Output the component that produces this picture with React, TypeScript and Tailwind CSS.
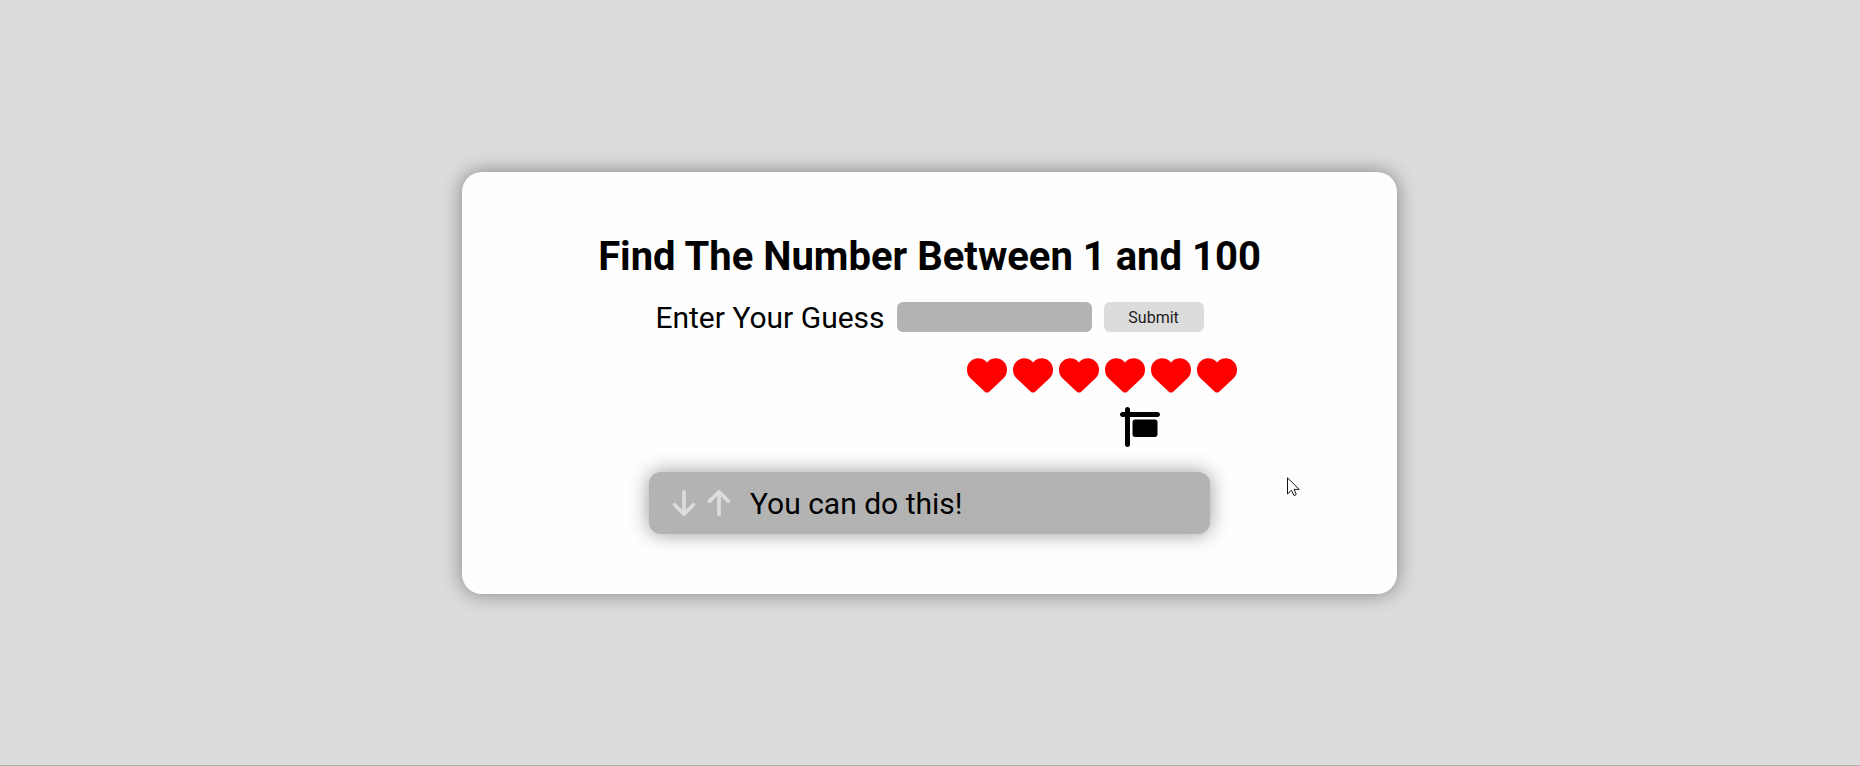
import { useState } from "react";
import type { FormEvent } from "react";
import { FaArrowDown, FaArrowUp, FaHeart, FaSignHanging } from "react-icons/fa6";

const LIVES = [1, 2, 3, 4, 5, 6];

function Pointer() {
  return (
    <svg
      className="absolute top-[305px] right-[97px] h-[20px] w-[13px]"
      viewBox="0 0 13 20"
      aria-hidden="true"
    >
      <path
        d="M0.5 0.8V17L4.4 13.4L6.9 18.3Q8.8 18.8 9.2 17L7 12.4H12.2Z"
        fill="#fff"
        stroke="#14141c"
        strokeWidth="1"
      />
    </svg>
  );
}

function GuessForm() {
  const [guess, setGuess] = useState("");
  const submit = (event: FormEvent) => {
    event.preventDefault();
    setGuess("");
  };
  return (
    <form onSubmit={submit} className="mt-5 flex h-[30px] items-center justify-center gap-3">
      <label htmlFor="guess" className="pt-[2px] text-[30px] leading-9">
        Enter Your Guess
      </label>
      <input
        id="guess"
        type="text"
        value={guess}
        onChange={(event) => setGuess(event.target.value)}
        className="h-[30px] w-[195px] rounded-md bg-[#b3b3b3] px-2 text-base outline-none"
      />
      <button
        type="submit"
        className="h-[30px] w-[100px] rounded-md bg-[#dcdcdc] pt-[2px] text-base text-[#1c1c1c]"
      >
        Submit
      </button>
    </form>
  );
}

export default function App() {
  return (
    <div className="flex min-h-screen flex-col items-center justify-center border-b border-[#acacac] bg-[#dcdcdc] pr-px font-['Roboto',sans-serif] text-black">
      <main className="relative w-[935px] max-w-full rounded-[20px] bg-[#fefefe] py-[60px] shadow-[0_0_20px_#808080]">
        <h1 className="text-center text-[40px] leading-[50px] font-bold">
          Find The Number Between 1 and 100
        </h1>
        <GuessForm />
        <div className="mt-[23px] flex justify-end gap-[6px] pr-[160px] text-[40px] text-[#ff0000]">
          {LIVES.map((life) => (
            <FaHeart key={life} />
          ))}
        </div>
        <div className="mt-3 flex justify-end pr-[237px] text-[40px]">
          <FaSignHanging />
        </div>
        <div className="mx-auto mt-[25px] flex h-[62px] w-3/5 items-center rounded-xl bg-[#b3b3b3] px-5 shadow-[0_0_20px_#999999]">
          <div className="flex gap-[5px] text-[30px] text-[#dcdcdc]">
            <FaArrowDown />
            <FaArrowUp />
          </div>
          <p className="ml-4 pt-[2px] text-[30px] leading-9">You can do this!</p>
        </div>
        <Pointer />
      </main>
    </div>
  );
}
